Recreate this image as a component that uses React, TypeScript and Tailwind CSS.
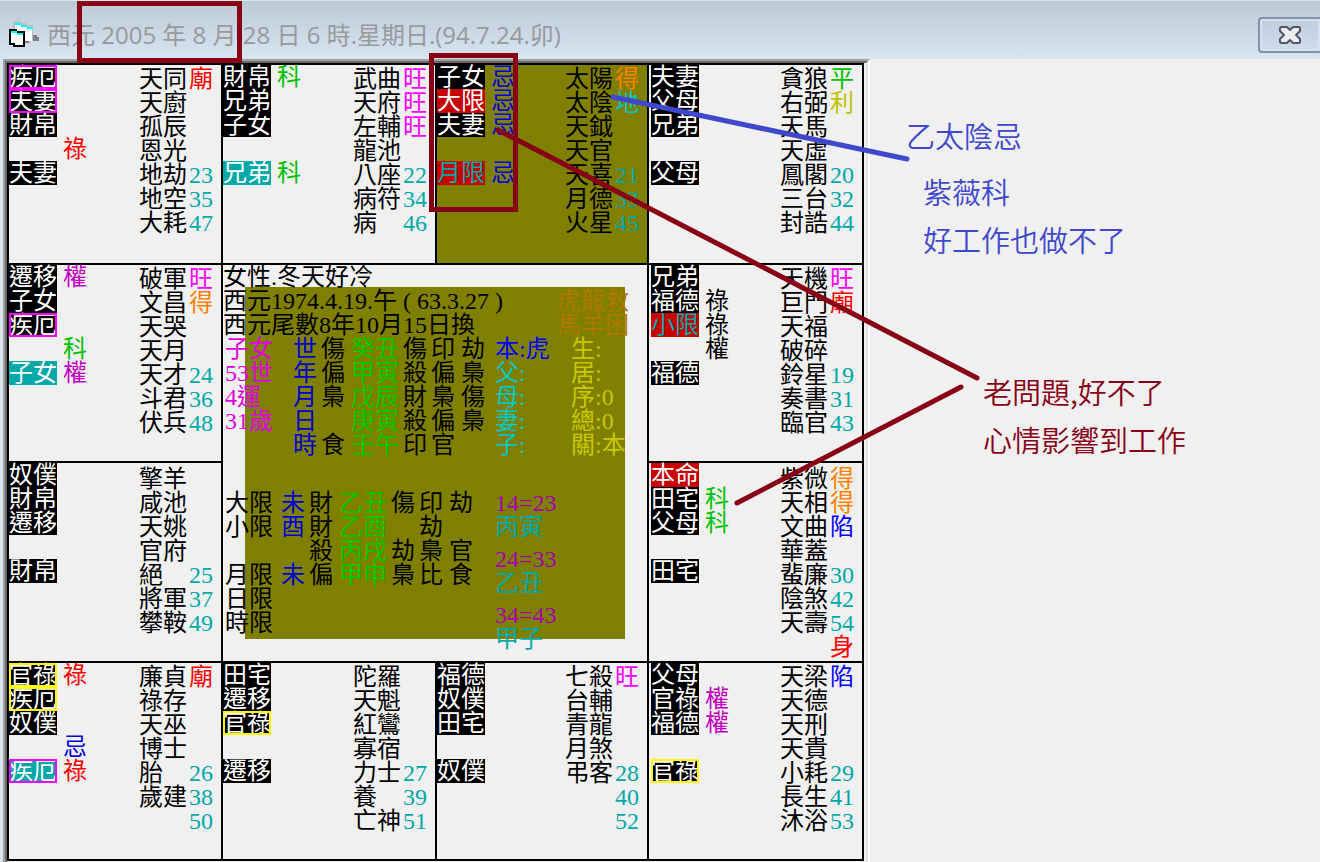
import type { ReactNode } from "react"

type Tag = { name: string; style?: string; mark?: string; markColor?: string }
type Star = { name: string; note?: string; color?: string }
type Palace = { id: string; bg?: string; body?: string; tags: Tag[]; stars: Star[] }

const BLACK = "bg-black text-white"
const TEAL = "bg-[#00a8a8] text-white"
const PINK_BOX = "bg-black text-white outline-2 -outline-offset-2 outline-[#ff00ff]"
const YELLOW_BOX = "bg-black text-white outline-2 -outline-offset-2 outline-[#ffff00]"
const TEAL_PINK = "bg-[#00a8a8] text-white outline-2 -outline-offset-2 outline-[#ff00ff]"
const RED = "bg-[#c80000] text-white"
const RED_TEAL = "bg-[#c80000] text-[#00a8a8]"

const red = "text-[#ff0000]"
const pink = "text-[#ff00ff]"
const green = "text-[#00c000]"
const blue = "text-[#0000e0]"
const purple = "text-[#c000c0]"
const orange = "text-[#ff8000]"
const teal = "text-[#00a8a8]"

// top row
const top: Palace[] = [
  {
    id: "p1",
    tags: [
      { name: "疾厄", style: PINK_BOX },
      { name: "夫妻", style: PINK_BOX },
      { name: "財帛" },
      { name: "", mark: "祿", markColor: red },
      { name: "夫妻" },
    ],
    stars: [
      { name: "天同", note: "廟", color: red },
      { name: "天廚" },
      { name: "孤辰" },
      { name: "恩光" },
      { name: "地劫", note: "23" },
      { name: "地空", note: "35" },
      { name: "大耗", note: "47" },
    ],
  },
  {
    id: "p2",
    tags: [
      { name: "財帛", mark: "科", markColor: green },
      { name: "兄弟" },
      { name: "子女" },
      { name: "" },
      { name: "兄弟", style: TEAL, mark: "科", markColor: green },
    ],
    stars: [
      { name: "武曲", note: "旺", color: pink },
      { name: "天府", note: "旺", color: pink },
      { name: "左輔", note: "旺", color: pink },
      { name: "龍池" },
      { name: "八座", note: "22" },
      { name: "病符", note: "34" },
      { name: "病", note: "46" },
    ],
  },
  {
    id: "p3",
    bg: "bg-[#808000]",
    tags: [
      { name: "子女", mark: "忌", markColor: blue },
      { name: "大限", style: RED, mark: "忌", markColor: blue },
      { name: "夫妻", mark: "忌", markColor: blue },
      { name: "" },
      { name: "月限", style: RED_TEAL, mark: "忌", markColor: blue },
    ],
    stars: [
      { name: "太陽", note: "得", color: orange },
      { name: "太陰", note: "地", color: "text-[#00c8c8]" },
      { name: "天鉞" },
      { name: "天官" },
      { name: "天喜", note: "21" },
      { name: "月德", note: "33" },
      { name: "火星", note: "45" },
    ],
  },
  {
    id: "p4",
    body: "pl-0.5",
    tags: [{ name: "夫妻" }, { name: "父母" }, { name: "兄弟" }, { name: "" }, { name: "父母" }],
    stars: [
      { name: "貪狼", note: "平", color: green },
      { name: "右弼", note: "利", color: "text-[#c0c000]" },
      { name: "天馬" },
      { name: "天虛" },
      { name: "鳳閣", note: "20" },
      { name: "三台", note: "32" },
      { name: "封誥", note: "44" },
    ],
  },
]

const left2: Palace = {
  id: "p5",
  tags: [
    { name: "遷移", mark: "權", markColor: purple },
    { name: "子女" },
    { name: "疾厄", style: PINK_BOX },
    { name: "", mark: "科", markColor: green },
    { name: "子女", style: TEAL, mark: "權", markColor: purple },
  ],
  stars: [
    { name: "破軍", note: "旺", color: pink },
    { name: "文昌", note: "得", color: orange },
    { name: "天哭" },
    { name: "天月" },
    { name: "天才", note: "24" },
    { name: "斗君", note: "36" },
    { name: "伏兵", note: "48" },
  ],
}

const right2: Palace = {
  id: "p6",
  body: "pl-0.5",
  tags: [
    { name: "兄弟" },
    { name: "福德", mark: "祿", markColor: "text-black" },
    { name: "小限", style: RED_TEAL, mark: "祿", markColor: "text-black" },
    { name: "", mark: "權", markColor: "text-black" },
    { name: "福德" },
  ],
  stars: [
    { name: "天機", note: "旺", color: pink },
    { name: "巨門", note: "廟", color: red },
    { name: "天福" },
    { name: "破碎" },
    { name: "鈴星", note: "19" },
    { name: "奏書", note: "31" },
    { name: "臨官", note: "43" },
  ],
}

const left3: Palace = {
  id: "p7",
  tags: [{ name: "奴僕" }, { name: "財帛" }, { name: "遷移" }, { name: "" }, { name: "財帛" }],
  stars: [
    { name: "擎羊" },
    { name: "咸池" },
    { name: "天姚" },
    { name: "官府" },
    { name: "絕", note: "25" },
    { name: "將軍", note: "37" },
    { name: "攀鞍", note: "49" },
  ],
}

const right3: Palace = {
  id: "p8",
  body: "pl-0.5",
  tags: [
    { name: "本命", style: RED },
    { name: "田宅", mark: "科", markColor: green },
    { name: "父母", mark: "科", markColor: green },
    { name: "" },
    { name: "田宅" },
  ],
  stars: [
    { name: "紫微", note: "得", color: orange },
    { name: "天相", note: "得", color: orange },
    { name: "文曲", note: "陷", color: "text-[#0000ff]" },
    { name: "華蓋" },
    { name: "蜚廉", note: "30" },
    { name: "陰煞", note: "42" },
    { name: "天壽", note: "54" },
    { name: "", note: "身", color: red },
  ],
}

// bottom row
const bottom: Palace[] = [
  {
    id: "p9",
    tags: [
      { name: "官祿", style: YELLOW_BOX, mark: "祿", markColor: red },
      { name: "疾厄", style: YELLOW_BOX },
      { name: "奴僕" },
      { name: "", mark: "忌", markColor: blue },
      { name: "疾厄", style: TEAL_PINK, mark: "祿", markColor: red },
    ],
    stars: [
      { name: "廉貞", note: "廟", color: red },
      { name: "祿存" },
      { name: "天巫" },
      { name: "博士" },
      { name: "胎", note: "26" },
      { name: "歲建", note: "38" },
      { name: "", note: "50" },
    ],
  },
  {
    id: "p10",
    tags: [{ name: "田宅" }, { name: "遷移" }, { name: "官祿", style: YELLOW_BOX }, { name: "" }, { name: "遷移" }],
    stars: [
      { name: "陀羅" },
      { name: "天魁" },
      { name: "紅鸞" },
      { name: "寡宿" },
      { name: "力士", note: "27" },
      { name: "養", note: "39" },
      { name: "亡神", note: "51" },
    ],
  },
  {
    id: "p11",
    tags: [{ name: "福德" }, { name: "奴僕" }, { name: "田宅" }, { name: "" }, { name: "奴僕" }],
    stars: [
      { name: "七殺", note: "旺", color: pink },
      { name: "台輔" },
      { name: "青龍" },
      { name: "月煞" },
      { name: "弔客", note: "28" },
      { name: "", note: "40" },
      { name: "", note: "52" },
    ],
  },
  {
    id: "p12",
    body: "pl-0.5",
    tags: [
      { name: "父母" },
      { name: "官祿", mark: "權", markColor: purple },
      { name: "福德", mark: "權", markColor: purple },
      { name: "" },
      { name: "官祿", style: YELLOW_BOX },
    ],
    stars: [
      { name: "天梁", note: "陷", color: "text-[#0000ff]" },
      { name: "天德" },
      { name: "天刑" },
      { name: "天貴" },
      { name: "小耗", note: "29" },
      { name: "長生", note: "41" },
      { name: "沐浴", note: "53" },
    ],
  },
]

// age / pillar / gods / relatives
const pillars = [
  ["子女", "世", "傷", "癸丑", "傷", "印", "劫", "本:虎", "生:"],
  ["53世", "年", "偏", "甲寅", "殺", "偏", "梟", "父:", "居:"],
  ["4運", "月", "梟", "戊辰", "財", "梟", "傷", "母:", "序:0"],
  ["31歲", "日", "", "庚寅", "殺", "偏", "梟", "妻:", "總:0"],
  ["", "時", "食", "壬午", "印", "官", "", "子:", "關:本"],
]

const limits = [
  ["大限", "未", "財", "乙丑", "傷", "印", "劫"],
  ["小限", "酉", "財", "乙酉", "", "劫", ""],
  ["", "", "殺", "丙戌", "劫", "梟", "官"],
  ["月限", "未", "偏", "甲申", "梟", "比", "食"],
  ["日限", "", "", "", "", "", ""],
  ["時限", "", "", "", "", "", ""],
]

const decades = [
  ["14=23", "丙寅"],
  ["24=33", "乙丑"],
  ["34=43", "甲子"],
]

function PalaceCell({ palace, down }: { palace: Palace; down?: boolean }) {
  return (
    <div className={`flex justify-between pr-2 ${palace.bg ?? "bg-[#f0f0f0]"} ${palace.body ?? ""}`}>
      <div>
        {palace.tags.map((t, i) => (
          <div key={i} className="flex h-6 gap-1.5">
            <span className={`h-6 w-12 ${t.name ? t.style ?? BLACK : ""}`}>{t.name}</span>
            <span className={`w-6 ${t.markColor ?? ""}`}>{t.mark}</span>
          </div>
        ))}
      </div>
      <div className={down ? "pt-1" : "pt-0.5"}>
        {palace.stars.map((s, i) => (
          <div key={i} className="flex h-6 gap-0.5">
            <span className="w-12">{s.name}</span>
            <span className={`w-6 ${s.color ?? teal}`}>{s.note}</span>
          </div>
        ))}
      </div>
    </div>
  )
}

function Center() {
  const colors = ["text-[#e000e0]", "text-[#0000d0]", "", "text-[#00c800]", "", "", ""]
  return (
    <div className="relative col-span-2 row-span-2 bg-[#f0f0f0]">
      <div className="absolute inset-[22px] bg-[#808000]" />
      <div className="relative">
        <p>女性.冬天好冷</p>
        <div className="flex justify-between pr-[18px]">
          <div>
            <p>西元1974.4.19.午 ( 63.3.27 )</p>
            <p>西元尾數8年10月15日換</p>
          </div>
          <div className="text-[#b07800]">
            <p>虎龍救</p>
            <p>馬羊困</p>
          </div>
        </div>
        <div className="pl-0.5">
          {pillars.map((row, r) => (
            <div key={r} className="grid h-6 grid-cols-[68px_28px_30px_52px_28px_30px_34px_76px_1fr] whitespace-nowrap">
              {row.map((c, i) => (
                <span
                  key={i}
                  className={i === 7 ? (r === 0 ? "text-[#0000ff]" : "text-[#00c8c8]") : i === 8 ? "text-[#c8c800]" : colors[i]}
                >
                  {c}
                </span>
              ))}
            </div>
          ))}
        </div>
        <div className="flex pt-[34px] pl-0.5">
          <div>
            {limits.map((row, r) => (
              <div key={r} className="grid h-6 grid-cols-[56px_28px_30px_52px_28px_30px_46px] whitespace-nowrap">
                {row.map((c, i) => (
                  <span key={i} className={i === 0 ? "text-black" : colors[i]}>
                    {c}
                  </span>
                ))}
              </div>
            ))}
          </div>
          <div className="flex flex-col gap-2">
            {decades.map(([range, pillar]) => (
              <div key={range}>
                <p className="text-[#a800a8]">{range}</p>
                <p className={teal}>{pillar}</p>
              </div>
            ))}
          </div>
        </div>
      </div>
    </div>
  )
}

function Board({ children }: { children: ReactNode }) {
  return (
    <section className="min-w-0 flex-1 border-t-2 border-r-2 border-l-2 border-t-[#a0a0a0] border-r-white border-l-[#a0a0a0]">
      <div className="h-full border-t-2 border-r-2 border-l-2 border-t-[#696969] border-r-[#e3e3e3] border-l-[#696969] pr-0.5">
        <div className="grid grid-cols-[212fr_212fr_210fr_213fr] grid-rows-[minmax(198px,auto)_minmax(196px,auto)_minmax(198px,auto)_minmax(196px,auto)] gap-0.5 bg-black p-0.5 font-['Liberation_Serif','Noto_Sans_CJK_TC',sans-serif] text-2xl leading-6 text-black">
          {children}
        </div>
      </div>
    </section>
  )
}

function AppIcon() {
  return (
    <svg width="32" height="28" viewBox="0 0 32 28" shapeRendering="crispEdges" aria-hidden="true">
      <path d="M4 0h8v2h6v2h6v16h-2v2H4z" fill="#c0c0c0" />
      <path d="M6 4h6v2h7v2h4v12H6z" fill="#fff" />
      <path d="M6 2h6v2h6v2h6v2h-6V6h-6V4H6z" fill="#00ffff" />
      <path d="M24 14h4v2h2v4h-6zM16 20h4v2h-4z" fill="#808080" />
      <path d="M0 8h8v2h8v16H4v-2H0z" fill="#000" />
      <path d="M2 12h12v12H6v-2H2z" fill="#fff" />
      <path d="M2 10h6v2h6v2H8v-2H2z" fill="#00ffff" />
    </svg>
  )
}

export default function App() {
  return (
    <div className="relative flex min-h-screen flex-col overflow-hidden bg-[#f0f0f0]">
      <header className="flex h-[59px] items-start justify-between border-t border-[#dfe6ec] bg-linear-to-b from-[#bccad8] to-[#d7e4f2] pl-[9px]">
        <div className="flex items-center gap-1.5 pt-[18px]">
          <AppIcon />
          <h1 className="font-['Open_Sans','Noto_Sans_CJK_TC',sans-serif] text-2xl leading-8 font-normal text-[#999999]">
            西元 2005 年 8 月 28 日 6 時.星期日.(94.7.24.卯)
          </h1>
        </div>
        <button
          type="button"
          aria-label="Close"
          className="mt-4 flex h-9 w-[62px] items-center justify-center rounded-l-sm border-2 border-r-0 border-[#8490ad] bg-linear-to-b from-[#c0cddd] to-[#d0ddec] inset-ring-2 inset-ring-[#d8e2ef]"
        >
          <svg width="22" height="18" viewBox="0 0 22 18" aria-hidden="true">
            <path
              d="M2 1h6l3 3 3-3h6l1 1v3l-4 4 4 4v3l-1 1h-6l-3-3-3 3H2l-1-1v-3l4-4-4-4V2z"
              fill="#ececec"
              stroke="#51566a"
              strokeWidth="2"
              strokeLinejoin="round"
            />
          </svg>
        </button>
      </header>

      <main className="flex flex-1 border-l-[3px] border-[#d7e4f2]">
        <Board>
          {top.map(p => (
            <PalaceCell key={p.id} palace={p} />
          ))}
          <PalaceCell palace={left2} />
          <Center />
          <PalaceCell palace={right2} />
          <PalaceCell palace={left3} down />
          <PalaceCell palace={right3} down />
          {bottom.map(p => (
            <PalaceCell key={p.id} palace={p} />
          ))}
        </Board>

        <aside className="w-[450px] shrink-0 pt-15 font-['Noto_Sans_CJK_TC',sans-serif] text-[29px] leading-8 font-[350]">
          <div className="text-[#3f48cc]">
            <p className="pl-9">乙太陰忌</p>
            <p className="mt-6 pl-[53px]">紫薇科</p>
            <p className="mt-4 pl-[53px]">好工作也做不了</p>
          </div>
          <div className="mt-[120px] pl-[113px] text-[#880015]">
            <p>老問題,好不了</p>
            <p className="mt-4">心情影響到工作</p>
          </div>
        </aside>
      </main>

      {/* hand drawn marks over the chart */}
      <svg
        className="pointer-events-none absolute top-0 left-0"
        width="1320"
        height="862"
        viewBox="0 0 1320 862"
        fill="none"
        stroke="#880015"
        strokeWidth="5"
        strokeLinecap="round"
        aria-hidden="true"
      >
        <rect x="79.5" y="3.5" width="160" height="57" />
        <rect x="431.5" y="55.5" width="84" height="154" />
        <path d="M613 97L907 159" stroke="#3f48cc" />
        <path d="M498 130L977 378M737 503L961 387" />
      </svg>
    </div>
  )
}
